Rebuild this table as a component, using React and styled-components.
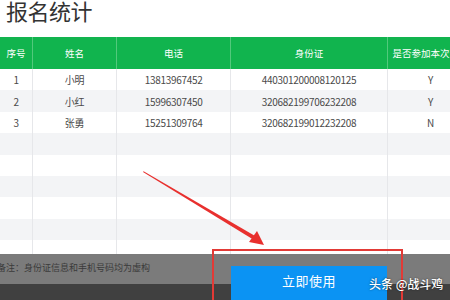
import React from 'react';
import styled, { createGlobalStyle } from 'styled-components';

const GlobalStyle = createGlobalStyle`
    body {
        margin: 0;
        background: #ffffff;
        font-family: "Noto Sans CJK SC", "Open Sans", sans-serif;
    }
`;

const columns = [
    { title: "序号", width: 32 },
    { title: "姓名", width: 84 },
    { title: "电话", width: 114 },
    { title: "身份证", width: 157 },
    { title: "是否参加本次活动", width: 86 },
];

const rows = [
    ["1", "小明", "13813967452", "440301200008120125", "Y"],
    ["2", "小红", "15996307450", "320682199706232208", "Y"],
    ["3", "张勇", "15251309764", "320682199012232208", "N"],
    ["", "", "", "", ""],
    ["", "", "", "", ""],
    ["", "", "", "", ""],
    ["", "", "", "", ""],
    ["", "", "", "", ""],
    ["", "", "", "", ""],
];

const App = () => {
    return (
        <Page>
            <GlobalStyle />
            <Title>报名统计</Title>
            <Table>
                <HeadRow>
                    {columns.map((c) => (
                        <HeadCell key={c.title} width={c.width}>{c.title}</HeadCell>
                    ))}
                </HeadRow>
                {rows.map((r, i) => (
                    <Row key={i} striped={i % 2 === 1}>
                        {r.map((v, j) => (
                            <Cell key={j} width={columns[j].width}>{v}</Cell>
                        ))}
                    </Row>
                ))}
            </Table>

            <Footer>
                <Note>备注：身份证信息和手机号码均为虚构</Note>
                <UseButton>立即使用</UseButton>
            </Footer>

            <Annotation width="450" height="300" viewBox="0 0 450 300">
                <polygon points="143,172 143.6,171.2 256,236.5 254,240" fill="#e8302e" />
                <polygon points="264,245 249,242 257,231" fill="#e8302e" />
                <rect x="213" y="250" width="189" height="60" fill="none" stroke="#e23a36" strokeWidth="2" />
            </Annotation>

            <Watermark>头条 @战斗鸡</Watermark>
        </Page>
    );
};

const Page = styled.div`
    position: relative;
    width: 450px;
    height: 300px;
    overflow: hidden;
    background: #ffffff;
`;

const Title = styled.h1`
    margin: 0;
    padding: 0 0 0 6px;
    height: 37px;
    font-size: 22px;
    line-height: 20px;
    font-weight: normal;
    color: #333333;
    letter-spacing: -0.5px;
`;

const Table = styled.div`
    width: 473px;
    display: flex;
    flex-direction: column;
`;

const HeadRow = styled.div`
    display: flex;
    height: 32px;
    background: #11b44e;
`;

const HeadCell = styled.div`
    flex: 0 0 ${(props) => props.width}px;
    display: flex;
    align-items: center;
    justify-content: center;
    white-space: nowrap;
    overflow: hidden;
    color: #ffffff;
    font-size: 9.5px;
    border-left: 1px solid #52c97c;
    box-sizing: border-box;

    &:first-child {
        border-left: none;
    }
`;

const Row = styled.div`
    display: flex;
    height: 21.4px;
    background: ${(props) => (props.striped ? "#f3f4f6" : "#ffffff")};
`;

const Cell = styled.div`
    flex: 0 0 ${(props) => props.width}px;
    display: flex;
    align-items: center;
    justify-content: center;
    font-size: 10px;
    letter-spacing: -0.3px;
    color: #4a4a4a;
    border-left: 1px solid #e6e7ea;
    box-sizing: border-box;

    &:first-child {
        border-left: none;
    }
`;

const Footer = styled.div`
    position: absolute;
    left: 0;
    top: 254px;
    width: 450px;
    height: 46px;
    display: flex;
    align-items: flex-start;
    background: linear-gradient(#7b7b7b 0, #7b7b7b 30px, #404040 30px);
`;

const Note = styled.div`
    flex: 0 0 234px;
    margin-left: -3px;
    padding-top: 8px;
    font-size: 9px;
    line-height: 12px;
    color: #3a3a3a;
    white-space: nowrap;
`;

const UseButton = styled.button`
    margin-top: 12px;
    width: 156px;
    height: 34px;
    border: none;
    padding: 0 0 6px;
    background: #0b93f3;
    color: #ffffff;
    font-family: "Noto Sans CJK SC", sans-serif;
    font-size: 13px;
    letter-spacing: 0.5px;
`;

const Annotation = styled.svg`
    position: absolute;
    left: 0;
    top: 0;
    pointer-events: none;
`;

const Watermark = styled.div`
    position: absolute;
    left: 369px;
    top: 276px;
    font-size: 12px;
    line-height: 16px;
    font-weight: 500;
    color: #ffffff;
    text-shadow: 0 0 2px rgba(0, 0, 0, 0.6);
    white-space: nowrap;
`;

export default App;
